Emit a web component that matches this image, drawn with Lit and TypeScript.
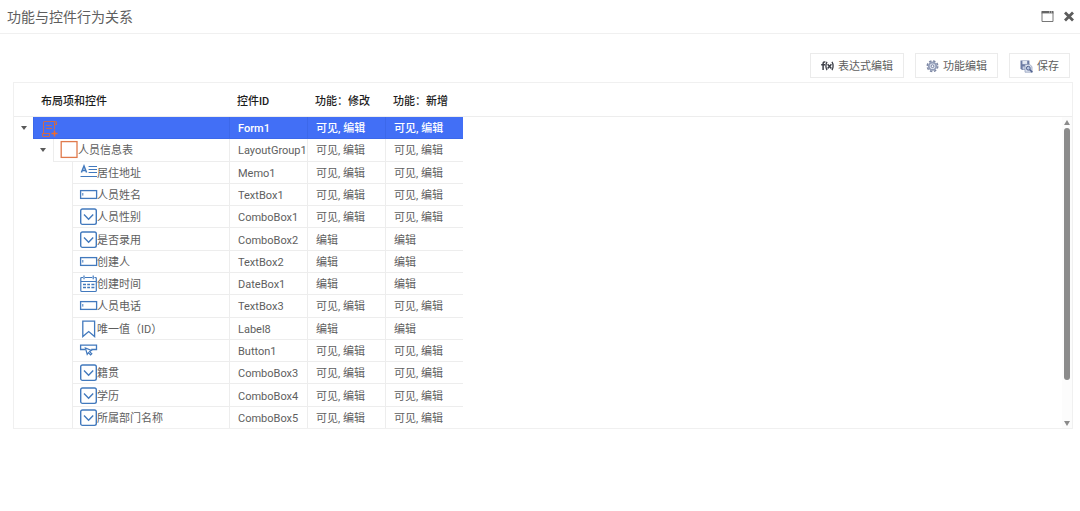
import { LitElement, html, css, svg, nothing } from "lit";
import { customElement, property, state } from "lit/decorators.js";
import { classMap } from "lit/directives/class-map.js";

type Kind = "form" | "group" | "memo" | "text" | "combo" | "date" | "label" | "button";

interface Row {
  kind: Kind;
  level: number;
  name: string;
  id: string;
  edit: string;
  add: string;
}

const FULL = "可见, 编辑";
const EDIT = "编辑";

const row = (kind: Kind, level: number, name: string, id: string, rights = FULL): Row => ({
  kind, level, name, id, edit: rights, add: rights,
});

const ROWS: Row[] = [
  row("form", 0, "", "Form1"),
  row("group", 1, "人员信息表", "LayoutGroup1"),
  row("memo", 2, "居住地址", "Memo1"),
  row("text", 2, "人员姓名", "TextBox1"),
  row("combo", 2, "人员性别", "ComboBox1"),
  row("combo", 2, "是否录用", "ComboBox2", EDIT),
  row("text", 2, "创建人", "TextBox2", EDIT),
  row("date", 2, "创建时间", "DateBox1", EDIT),
  row("text", 2, "人员电话", "TextBox3"),
  row("label", 2, "唯一值（ID）", "Label8", EDIT),
  row("button", 2, "", "Button1"),
  row("combo", 2, "籍贯", "ComboBox3"),
  row("combo", 2, "学历", "ComboBox4"),
  row("combo", 2, "所属部门名称", "ComboBox5"),
];

const GLYPHS: Record<Kind, unknown> = {
  form: svg`<g stroke="#c96a50" stroke-width="1.1">
    <path d="M8.5 17.5H2.5Q1.5 17.5 1.5 16.5V14.5H2.5V3.5Q2.5 2.5 3.5 2.5H14.5Q15.5 2.5 15.5 3.5V5.5H13.5"/>
    <path d="M13.5 3V10.5M5 6.5H11M5 9.5H11M2.5 14.5H8.5V17"/>
    <path d="M13.5 11.5V17.5M10.5 14.5H16.5" stroke="#f06a2a" stroke-width="1.5"/></g>`,
  group: svg`<rect x=".2" y=".6" width="15.8" height="15.8" stroke="#e07a4c" stroke-width="1.3"/>`,
  memo: svg`<path d="M1.4 8.6L4 2L6.6 8.6M2.4 6.4H5.6" stroke-width="1.5"/><path d="M8.6 2.5H17M8.6 5.5H17M8.6 8.5H17M.5 12.5H17" stroke-width="1.1"/>`,
  text: svg`<rect x=".6" y="4.6" width="16" height="7.8" stroke-width="1.3"/><path d="M2.8 7V9.6"/>`,
  combo: svg`<rect x=".7" y="1" width="15.6" height="15.4" rx="1.8" stroke-width="1.4"/><path d="M4 6.6L8.6 11.2L13.2 6.6" stroke-width="1.4"/>`,
  date: svg`<path d="M1 6.5H16.2M3 2.5H1.8Q.8 2.5 .8 3.6V15.4Q.8 16.5 1.8 16.5H15.2Q16.3 16.5 16.3 15.4V3.6Q16.3 2.5 15.2 2.5H14.4M5 2.5H12.2M4 .6V4.2M13.2 .6V4.2" stroke-width="1.2"/>
    <path d="M3 9.5H6M7.2 9.5H10M11.4 9.5H14.4M3 12.5H6M7.2 12.5H10M11.4 12.5H14.4" stroke-width="1.3"/>`,
  label: svg`<path d="M2.8 1.2H14.6V16.6L8.7 11.6L2.8 16.6Z" stroke-width="1.3"/>`,
  button: svg`<path d="M5.4 7.5H.6V3.1H16.5V7.5H11.2" stroke-width="1.3"/><path d="M5.4 6L7.2 12.4L8.4 10.6L10.6 13L11.8 11.8L9.6 9.6L11.4 8.4Z" stroke-width="1.2"/>`,
};

@customElement("control-icon")
class ControlIcon extends LitElement {
  @property() kind: Kind = "text";

  static styles = css`
    :host { display: block; flex: none; width: 17px; height: 18px; }
    .glyph { display: block; overflow: visible; fill: none; stroke: #4279bd; }
  `;

  render() {
    return html`<svg class="glyph" width="17" height="18" viewBox="0 0 17 18" aria-hidden="true">${GLYPHS[this.kind]}</svg>`;
  }
}

@customElement("app-root")
class AppRoot extends LitElement {
  @state() private selected = "Form1";

  static styles = css`
    :host {
      display: block;
      color: #5e5e5e;
      background: #fff;
      font: 11px/16px Roboto, "Noto Sans CJK SC", sans-serif;
    }
    button { font: inherit; color: inherit; margin: 0; cursor: pointer; }
    svg { display: block; flex: none; }
    .titlebar {
      display: flex;
      align-items: center;
      justify-content: space-between;
      height: 33px;
      padding: 0 5px 0 7px;
      border-bottom: 1px solid #f0f0f0;
    }
    .title { margin: 0; font-size: 14px; line-height: 20px; font-weight: 400; }
    .window-actions { display: flex; gap: 9px; }
    .plain { padding: 0; border: 0; background: none; }
    .content { padding: 19px 7px 0 13px; }
    .toolbar { display: flex; justify-content: flex-end; gap: 11px; padding: 0 3px 4px 0; }
    .tool {
      display: flex;
      align-items: center;
      gap: 4px;
      height: 25px;
      padding: 2px 10px 0;
      border: 1px solid #ebebeb;
      background: #fff;
    }
    .panel { display: flex; border: 1px solid #f0f0f0; }
    .grid { flex: 1; width: 100%; table-layout: fixed; border-spacing: 0; height: 345px; }
    .grid th, .grid td { padding: 3px 0 0 8px; text-align: left; white-space: nowrap; }
    .grid th {
      height: 28px;
      padding-top: 5px;
      box-sizing: content-box;
      border-bottom: 1px solid #ededed;
      color: #1c1c1c;
      font-weight: 500;
    }
    .grid .name { padding: 1px 0 0 7px; }
    .grid .caption { padding-left: 27px; }
    .narrow { width: 19px; }
    .step { width: 20px; }
    .names { width: 157px; }
    .data { width: 78px; }
    .cell { border-bottom: 1px solid #ededed; border-left: 1px solid #ededed; }
    .grid tr:last-child .cell { border-bottom: 0; }
    .name-line { display: flex; align-items: center; height: 18px; }
    .label { padding-top: 2px; }
    .grid .toggle-cell { padding: 0; }
    .toggle { display: flex; justify-content: center; width: 100%; height: 16px; align-items: center; }
    .selected .cell { background: #426ff6; border-color: #3c68ea; color: #fff; font-weight: 500; }
    .scroll {
      display: flex;
      flex-direction: column;
      flex: none;
      width: 10px;
    }
    .scroll-head { height: 33px; border-bottom: 1px solid #ededed; }
    .track {
      flex: 1;
      display: flex;
      flex-direction: column;
      align-items: center;
      gap: 3px;
      padding: 3px 0 2px;
      background: #fcfcfc;
    }
    .rail { flex: 1; }
    .thumb { width: 6px; height: 87%; border-radius: 3px; background: #8b8b8b; }
  `;

  private indent(r: Row) {
    const arrow = (label: string) => html`<td class="toggle-cell">
      <button class="plain toggle" aria-label=${label}>
        <svg width="6" height="4" viewBox="0 0 6 4"><path d="M0 0H6L3 4Z" fill="#5a5a5a"/></svg>
      </button></td>`;
    if (r.level === 0) return arrow("折叠");
    if (r.level === 1) return html`<td></td>${arrow("折叠")}`;
    return html`<td colspan="3"></td>`;
  }

  private renderRow(r: Row) {
    return html`<tr class=${classMap({ selected: r.id === this.selected })} @click=${() => (this.selected = r.id)}>
      ${this.indent(r)}
      <td class="cell name" colspan=${r.level === 0 ? 3 : r.level === 1 ? 2 : 1}>
        <div class="name-line"><control-icon .kind=${r.kind}></control-icon>${r.name ? html`<span class="label">${r.name}</span>` : nothing}</div>
      </td>
      <td class="cell">${r.id}</td>
      <td class="cell">${r.edit}</td>
      <td class="cell">${r.add}</td>
      <td></td>
    </tr>`;
  }

  render() {
    return html`
      <header class="titlebar">
        <h1 class="title">功能与控件行为关系</h1>
        <div class="window-actions">
          <button class="plain" aria-label="最大化">
            <svg width="13" height="12" viewBox="0 0 13 12"><path d="M1 1.5V10.5H12V1.5" fill="none" stroke="#777"/><path d="M.5 0H12.5V2.4H.5Z" fill="#666"/><path d="M8 1H9M10 1H11" stroke="#fff" stroke-width=".8"/></svg>
          </button>
          <button class="plain" aria-label="关闭">
            <svg width="12" height="12" viewBox="0 0 12 12"><path d="M2 1.5L10 9.5M10 1.5L2 9.5" stroke="#5c5c5c" stroke-width="2.8"/></svg>
          </button>
        </div>
      </header>
      <main class="content">
        <div class="toolbar">
          <button class="tool">
            <svg width="13" height="12" viewBox="0 0 13 12" fill="none" stroke="#3d3f48">
              <path d="M4.4 1.1Q2.2 .4 2.1 2.7V9.1M.2 3.8H4" stroke-width="1.5"/>
              <path d="M6 .9Q3.8 4.9 6 9.1M11 .9Q13.2 4.9 11 9.1" stroke-width="1.3"/>
              <path d="M6.6 3.3L10.4 7.5M10.4 3.3L6.6 7.5" stroke-width="1.5"/>
            </svg>表达式编辑
          </button>
          <button class="tool">
            <svg width="13" height="13" viewBox="0 0 13 13" fill="none">
              <circle cx="6.5" cy="6.2" r="5.2" stroke="#7d87a3" stroke-width="1.6" stroke-dasharray="2.4 1.68"/>
              <circle cx="6.5" cy="6.2" r="3.7" fill="#dfe5f0" stroke="#929db8" stroke-width="1.8"/>
              <circle cx="6.5" cy="6.2" r="1.4" fill="#fff" stroke="#7581a2"/>
            </svg>功能编辑
          </button>
          <button class="tool">
            <svg width="13" height="14" viewBox="0 0 13 14">
              <path d="M.5 .5H9.4V10H2L.5 8.6Z" fill="#6c7ba3"/>
              <path d="M2.4 .8H7.2V4.2H2.4Z" fill="#e4e9f3"/><path d="M2.6 6.4H6V9.6H2.6Z" fill="#c5cde0"/>
              <path d="M5 4.4H9.6L12 6.6V12.2H5Z" fill="#dbe1ee" stroke="#8b98b8" stroke-width=".7"/>
              <circle cx="8.3" cy="8.2" r="1.9" fill="#b9c6e2" stroke="#51628f"/><path d="M9.7 9.6L12.4 12.2" stroke="#51628f" stroke-width="1.5"/>
            </svg>保存
          </button>
        </div>
        <section class="panel">
          <table class="grid">
            <colgroup>
              <col class="narrow"><col class="step"><col class="narrow"><col class="names">
              <col class="data"><col class="data"><col class="data"><col>
            </colgroup>
            <thead>
              <tr>
                <th class="caption" colspan="4">布局项和控件</th>
                <th>控件ID</th><th>功能：修改</th><th>功能：新增</th><th></th>
              </tr>
            </thead>
            <tbody>${ROWS.map((r) => this.renderRow(r))}</tbody>
          </table>
          <div class="scroll">
            <div class="scroll-head"></div>
            <div class="track">
              <svg width="6" height="5" viewBox="0 0 6 5"><path d="M3 0L6 5H0Z" fill="#8b8b8b"/></svg>
              <div class="rail"><div class="thumb"></div></div>
              <svg width="6" height="5" viewBox="0 0 6 5"><path d="M0 0H6L3 5Z" fill="#8b8b8b"/></svg>
            </div>
          </div>
        </section>
      </main>
    `;
  }
}
